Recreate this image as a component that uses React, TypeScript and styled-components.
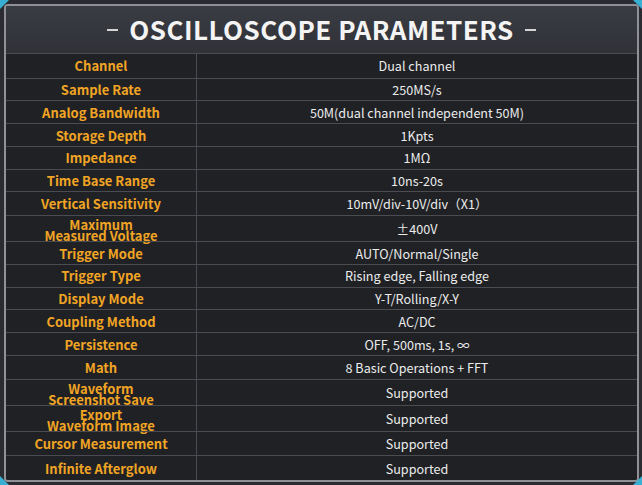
import React from "react";
import styled, { createGlobalStyle } from "styled-components";

const Global = createGlobalStyle`
  html, body { margin: 0; padding: 0; background: #2a2c32; }
  #root { width: 642px; height: 485px; }
`;

const Page = styled.div`
  position: relative;
  width: 642px;
  height: 485px;
  box-sizing: border-box;
  padding: 4px 3px 3px 4px;
  background: #2a2c32;
  font-family: "Noto Sans CJK SC", "Noto Sans", sans-serif;
`;

const Panel = styled.div`
  height: 100%;
  box-sizing: border-box;
  border: 2px solid #8f9197;
  border-radius: 4px;
  display: flex;
  flex-direction: column;
  overflow: hidden;
  background: #1f2024;
`;

const Header = styled.div`
  height: 47px;
  flex: none;
  display: flex;
  align-items: center;
  justify-content: center;
  gap: 11px;
  background: linear-gradient(180deg, #3a3c43 0%, #303238 100%);
  color: #f4f4f4;
  font-weight: 700;
  font-size: 26px;
  letter-spacing: 0.5px;
  box-sizing: border-box;
`;

const Title = styled.span`
  line-height: 30px;
  margin-top: -1px;
`;

const Dash = styled.span`
  display: block;
  width: 11px;
  height: 2px;
  background: #d4d4d4;
`;

const Table = styled.div`
  flex: 1;
  display: flex;
  flex-direction: column;
  background: #202125;
`;

const Row = styled.div<{ $h: number }>`
  flex: ${(p) => p.$h} 1 0;
  display: grid;
  grid-template-columns: 191px 1fr;
  border-top: 1px solid #4a4c52;
`;

const Label = styled.div<{ $two?: boolean }>`
  display: flex;
  align-items: center;
  justify-content: center;
  text-align: center;
  border-right: 1px solid #4a4c52;
  color: #f2a524;
  font-weight: 700;
  font-size: 13px;
  line-height: ${(p) => (p.$two ? "11px" : "16px")};
  padding-top: ${(p) => (p.$two ? "3px" : "1px")};
  white-space: nowrap;
`;

const Value = styled.div`
  display: flex;
  align-items: center;
  justify-content: center;
  padding-top: 1px;
  color: #ececec;
  font-size: 12.6px;
  line-height: 16px;
  white-space: nowrap;
`;

const Corner = styled.svg<{ $pos: string }>`
  position: absolute;
  width: 10px;
  height: 10px;
  ${(p) => p.$pos}
`;

const rows: [string, string, number][] = [
  ["Channel", "Dual channel", 25],
  ["Sample Rate", "250MS/s", 23],
  ["Analog Bandwidth", "50M(dual channel independent 50M)", 23],
  ["Storage Depth", "1Kpts", 23],
  ["Impedance", "1MΩ", 23],
  ["Time Base Range", "10ns-20s", 23],
  ["Vertical Sensitivity", "10mV/div-10V/div\uFF08X1\uFF09", 24],
  ["Maximum\nMeasured Voltage", "±400V", 24],
  ["Trigger Mode", "AUTO/Normal/Single", 23],
  ["Trigger Type", "Rising edge, Falling edge", 23],
  ["Display Mode", "Y-T/Rolling/X-Y", 23],
  ["Coupling Method", "AC/DC", 23],
  ["Persistence", "OFF, 500ms, 1s, ∞", 23],
  ["Math", "8 Basic Operations + FFT", 24],
  ["Waveform\nScreenshot Save", "Supported", 24],
  ["Export\nWaveform Image", "Supported", 25],
  ["Cursor Measurement", "Supported", 25],
  ["Infinite Afterglow", "Supported", 25],
];

export default function App() {
  return (
    <>
      <Global />
      <Page>
        <Panel>
          <Header>
            <Dash />
            <Title>OSCILLOSCOPE PARAMETERS</Title>
            <Dash />
          </Header>
          <Table>
            {rows.map(([l, v, h]) => {
              const parts = l.split("\n");
              return (
                <Row key={l} $h={h}>
                  <Label $two={parts.length > 1}>
                    {parts.length > 1 ? (
                      <span>
                        {parts[0]}
                        <br />
                        {parts[1]}
                      </span>
                    ) : (
                      l
                    )}
                  </Label>
                  <Value>{v}</Value>
                </Row>
              );
            })}
          </Table>
        </Panel>
        <Corner $pos="left:0;top:0;" viewBox="0 0 10 10">
          <path d="M0 0 L9 0 L6 3 L3 6 L0 9 Z" fill="#3cc8f0" opacity="0.85" />
        </Corner>
        <Corner $pos="right:0;top:0;" viewBox="0 0 10 10">
          <path d="M10 0 L1 0 L4 3 L7 6 L10 9 Z" fill="#3cc8f0" opacity="0.85" />
        </Corner>
        <Corner $pos="left:0;bottom:0;" viewBox="0 0 10 10">
          <path d="M0 10 L9 10 L6 7 L3 4 L0 1 Z" fill="#3cc8f0" opacity="0.85" />
        </Corner>
        <Corner $pos="right:0;bottom:0;" viewBox="0 0 10 10">
          <path d="M10 10 L1 10 L4 7 L7 4 L10 1 Z" fill="#3cc8f0" opacity="0.85" />
        </Corner>
      </Page>
    </>
  );
}
